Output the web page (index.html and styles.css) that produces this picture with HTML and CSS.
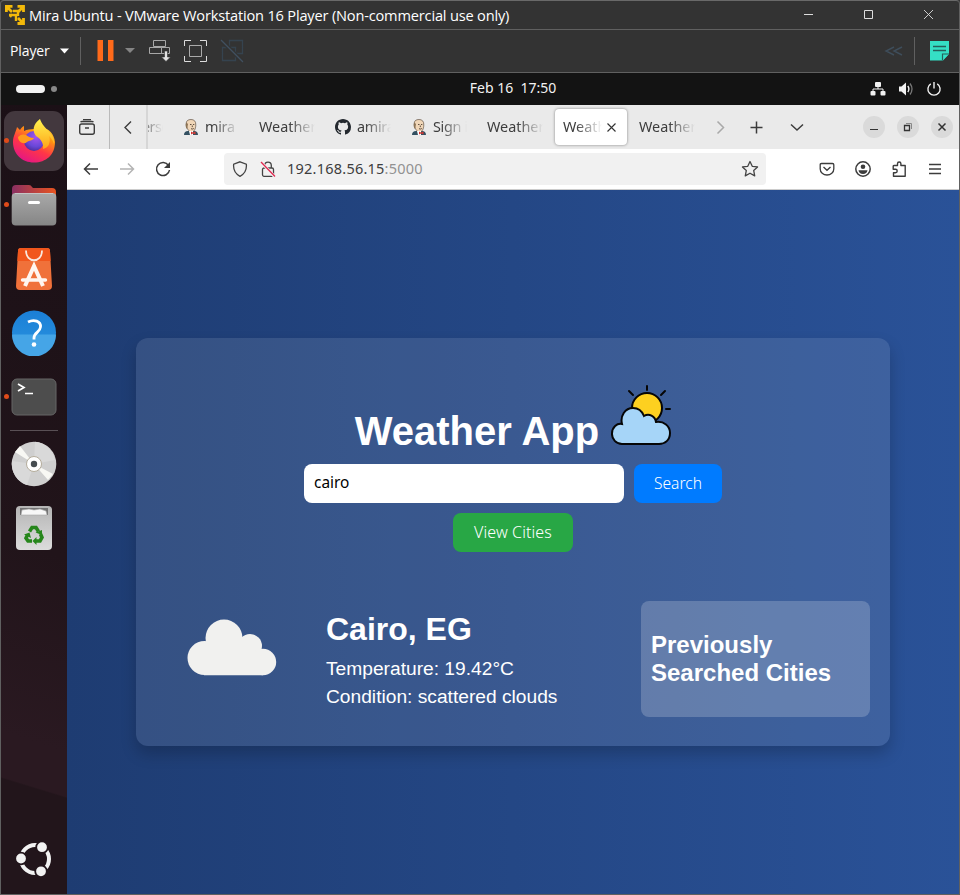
FILE: index.html
```
<!DOCTYPE html>
<html lang="en">
<head>
<meta charset="utf-8">
<title>Weather App</title>
<link rel="stylesheet" href="styles.css">
</head>
<body>
<svg width="0" height="0" class="defs">
  <defs>
    <symbol id="butler" viewBox="0 0 16 16">
      <path d="M1 16c0-3 1.500-3.800 4-4h6c2.500.2 4 1 4 4z" fill="#335061"/>
      <path d="M3.200 5C3 1.800 5 .5 8 .5s5 1.700 4.800 5.500c-.2 4-1.500 7-4.300 7S3.500 9 3.200 5z" fill="#f0d6b7" stroke="#4c3d30" stroke-width=".6"/>
      <path d="M3.300 3.500C2 6 2.800 9 4 10l1-5z" fill="#8b7355"/>
      <path d="M7 5.500h1.500M10 5.500h1.300M8 9.700q1.500.8 2.800-.2M9.300 6.500v1.600" stroke="#3a2c22" stroke-width=".8" fill="none"/>
      <path d="M6 12h4v4H7z" fill="#fff"/>
      <path d="M8 12.500l2 1 2.500-1v3l-2.500-1-2 1z" fill="#d33833"/>
    </symbol>
    <linearGradient id="foxBody" x1=".8" y1="0" x2=".3" y2="1"><stop offset="0" stop-color="#fff44f"/><stop offset=".35" stop-color="#ff980e"/><stop offset=".65" stop-color="#ff3647"/><stop offset="1" stop-color="#e31587"/></linearGradient>
    <linearGradient id="foxFlame" x1="0" y1="0" x2="0" y2="1"><stop offset="0" stop-color="#fff44f"/><stop offset="1" stop-color="#ffa318"/></linearGradient>
    <radialGradient id="globe" cx=".6" cy=".3" r=".8"><stop offset="0" stop-color="#a655ee"/><stop offset=".6" stop-color="#6847d8"/><stop offset="1" stop-color="#45278d"/></radialGradient>
    <linearGradient id="folder"><stop offset="0" stop-color="#8a2f62"/><stop offset="1" stop-color="#e95420"/></linearGradient>
    <linearGradient id="grey" x1="0" y1="0" x2="0" y2="1"><stop offset="0" stop-color="#a9a9a9"/><stop offset="1" stop-color="#858585"/></linearGradient>
    <linearGradient id="bin" x1="0" y1="0" x2="0" y2="1"><stop offset="0" stop-color="#b5b5b5"/><stop offset="1" stop-color="#dcdcdc"/></linearGradient>
    <linearGradient id="help" x1="0" y1="0" x2="0" y2="1"><stop offset="0" stop-color="#1b7fd6"/><stop offset="1" stop-color="#2a93e0"/></linearGradient>
  </defs>
</svg>
<div class="window">
  <header class="titlebar">
    <svg class="vm-logo" width="20" height="20" viewBox="0 0 20 20" fill="none" stroke="#f3b90a" stroke-width="2.800"><path d="M1.400 7V1.400h6.100M12.500 1.400H18.500V7M18.500 13v5.500H12.500M2 2l5 5M18 2l-5 5M18 18l-5-5"/><path d="M4 10h7v6M8 6h5v5M5 12l2-3" stroke-width="2.400"/></svg>
    <h1 class="window-title">Mira Ubuntu - VMware Workstation 16 Player (Non-commercial use only)</h1>
    <div class="win-controls">
      <svg width="60" height="28" viewBox="0 0 60 28"><path d="M26 13.500h9" stroke="#ddd"/></svg>
      <svg width="60" height="28" viewBox="0 0 60 28"><path d="M26.500 9.500h8v8h-8z" stroke="#ddd" fill="none"/></svg>
      <svg width="60" height="28" viewBox="0 0 60 28"><path d="M26 9l9 9M35 9l-9 9" stroke="#ddd" stroke-width=".9"/></svg>
    </div>
  </header>
  <div class="vm-bar">
    <span class="player">Player</span>
    <svg class="caret" width="10" height="6" viewBox="0 0 10 6"><path d="M0 .5h9L4.500 5.500z" fill="#fff"/></svg>
    <i class="bar-sep"></i>
    <svg width="150" height="42" viewBox="0 0 150 42" fill="none">
      <path d="M16.500 10h5.500v21h-5.500zM27 10h5.500v21H27z" fill="#ff6a1a"/>
      <path d="M44 18h10l-5 5z" fill="#858585"/>
      <g stroke="#a8a8a8"><path d="M72.500 10.500h12v6h-12zM68.500 17.500h12v6h-12zM80.500 17.500h8v6h-8z"/></g>
      <path d="M83.500 21h3v6h3L85 31.500 80.500 27h3z" fill="#e3e3e3" stroke="#333" stroke-width=".6"/>
      <path d="M110 10.500h-6.500V16M119 10.500h6.500V16M125.500 26v5.500H119M103.500 26v5.500h6.500" stroke="#ddd"/><path d="M108.500 15.500h12v11h-12z" stroke="#aaa"/>
    </svg>
    <svg class="unity" width="24" height="24" viewBox="0 0 24 24" fill="none" stroke="#35434f" stroke-width="1.300"><path d="M9.500 8V1.500h13v13h-7M2.500 8.500h13v13h-13z"/><path d="M1 1l22 22" stroke="#333" stroke-width="4"/><path d="M1 1l22 22" stroke="#405060"/></svg>
    <svg class="collapse" width="20" height="12" viewBox="0 0 20 12" fill="none" stroke="#3e4d5a" stroke-width="1.400"><path d="M10 2L2 6l8 4M18 2l-8 4 8 4"/></svg>
    <i class="bar-sep right"></i>
    <svg class="note" width="19" height="20" viewBox="0 0 19 20"><path d="M0 0h19v13l-6 6.500H0z" fill="#35dfc5"/><path d="M3 5.500h13M3 9.500h13" stroke="#265f5b" stroke-width="1.600"/><path d="M12.500 19.500v-6.500H19" stroke="#265f5b" fill="#35dfc5" stroke-width="1.200"/></svg>
  </div>
  <div class="gnome-bar">
    <div class="workspaces"><i class="pill"></i><i class="dot"></i></div>
    <time class="clock">Feb 16&nbsp; 17:50</time>
    <div class="status">
      <svg width="16" height="16" viewBox="0 0 16 16" fill="#f2f2f2"><rect x="5" y="1" width="6" height="5" rx="1"/><rect x=".5" y="10" width="5" height="4.500" rx="1"/><rect x="10.500" y="10" width="5" height="4.500" rx="1"/><path d="M8 5v3M3 11V8h10v3" stroke="#f2f2f2" fill="none"/></svg>
      <svg width="16" height="16" viewBox="0 0 16 16"><path d="M1 5.500h2.500L8 1.500v13L3.500 10.500H1z" fill="#f2f2f2"/><path d="M9.800 5q2.200 3 0 6" stroke="#f2f2f2" fill="none" stroke-width="1.400"/><path d="M12 2.500q4 5.500 0 11" stroke="#777" fill="none" stroke-width="1.300"/></svg>
      <svg width="16" height="16" viewBox="0 0 16 16" fill="none" stroke="#f2f2f2" stroke-width="1.400"><path d="M4.800 2.800a6.100 6.100 0 1 0 6.400 0M8 1v6.500"/></svg>
    </div>
  </div>
  <div class="desktop">
    <nav class="dock">
      <div class="app focused running"><svg width="44" height="44" viewBox="0 0 44 44">
        <path d="M27 0c1 4-1 6 1 9C36 8 42 14 43 23 43 36 34 43.500 22 43.500S1 35 1 23c0-6 3-10 4-15l3 3c1-2 2-3 4-4v5c8-3 18-3 22 4z" fill="url(#foxBody)"/>
        <circle cx="22" cy="22" r="10" fill="url(#globe)"/>
        <path d="M28 0c-7 5-8 12-4 17 5 3 8 8 7 13 6-2 6-5 6-5 1-3 1-6 0-8 3 3 4 5 5 8C44 15 31 10 28 0z" fill="url(#foxFlame)"/>
        <path d="M6 18c3-3 5-3 8-2 2 1 4 3 8 3-1 3-5 2-7 4-3 3-9 0-9-5z" fill="#ff9b1d"/></svg></div>
      <div class="app running"><svg width="46" height="42" viewBox="0 0 46 42"><path d="M1 5q0-4 4-4h13q2 0 3 2l1 1h19q4 0 4 4v18H1z" fill="url(#folder)"/><rect x=".7" y="9" width="44.600" height="32.500" rx="4" fill="url(#grey)"/><path d="M4 9.500h38" stroke="#c4c4c4"/><rect x="17" y="17" width="12" height="3" rx="1.500" fill="#fff"/></svg></div>
      <div class="app"><svg width="36" height="42" viewBox="0 0 36 42"><path d="M5 0h26q3 0 3 3l2 35q0 4-4 4H4q-4 0-4-4L2 3q0-3 3-3z" fill="#f0713a"/><path d="M5 0h26q3 0 3 3l.6 10H1.400L2 3q0-3 3-3z" fill="#f1561c"/><path d="M10 2.500c0 13 16 13 16 0" stroke="#f9e8df" stroke-width="1.800" fill="none"/><path d="M9 38l9-20 9 20" stroke="#fff6f0" stroke-width="4" fill="none"/><path d="M6.500 32h23" stroke="#fff6f0" stroke-width="3.400" stroke-linecap="round"/></svg></div>
      <div class="app"><svg width="46" height="46" viewBox="0 0 46 46"><circle cx="23" cy="22.500" r="22" fill="url(#help)"/><path d="M1 24.500h44a22 22 0 0 1-44 0z" fill="#45a5e7"/><path d="M17 12c6-3 13-1 12.500 5C29 22.500 23 22.500 23 28v1.500" stroke="#fff" stroke-width="2.800" fill="none"/><circle cx="23" cy="34.500" r="2.300" fill="#fff"/></svg></div>
      <div class="app running"><svg width="46" height="38" viewBox="0 0 46 38"><rect x="1" y="1" width="44" height="36" rx="5" fill="#4d4d4d" stroke="#666"/><path d="M7 6l6 3.500L7 13M14 15.500h8" stroke="#fff" stroke-width="1.700" fill="none"/></svg></div>
      <hr class="dock-line">
      <div class="app"><svg width="46" height="46" viewBox="0 0 46 46"><circle cx="23" cy="23" r="22.300" fill="#cfcfcf"/><path d="M23 23L1 20a22 22 0 0 0 15 24zM23 23L24 .8A22 22 0 0 1 44 19z" fill="#d9d9d9"/><path d="M23 23L4 11l5-6zM23 23l19 10-5 6z" fill="#f8f8f4"/><circle cx="23" cy="23" r="7.500" fill="#fff" stroke="#b5ad9c"/><circle cx="23" cy="23" r="3.200" fill="#464c50"/></svg></div>
      <div class="app"><svg width="38" height="46" viewBox="0 0 38 46"><rect x="1" y="1" width="36" height="44" rx="4" fill="url(#bin)"/><path d="M5 3h28v7H5z" fill="#737373"/><path d="M6 10l1-5 7-1 5 1 6-1 6 2 1 4z" fill="#f7f7f7" stroke="#aaa" stroke-width=".6"/><g stroke="#26861b" stroke-width="3.600" fill="none"><path d="M14.500 26.500l2.500-4h4l2.500 4M25.500 29l1.500 3.500-2 3.500H21M17 36h-4l-2-3 1.500-3"/></g><path d="M20.500 27.500l6.500-2.500v5zM21.500 32v8l-4-4zM9 29.500l5.500-2 1.500 5.500z" fill="#26861b"/></svg></div>
      <svg class="show-apps" width="36" height="36" viewBox="0 0 36 36"><circle cx="19" cy="18" r="14" fill="none" stroke="#f2f2f2" stroke-width="4"/><g fill="#f2f2f2" stroke="#22151b" stroke-width="1.800"><circle cx="5" cy="17.500" r="5.800"/><circle cx="26" cy="6.200" r="5.800"/><circle cx="25" cy="30.300" r="5.800"/></g></svg>
    </nav>
    <div class="browser">
      <div class="tabstrip">
        <div class="view-btn"><svg width="16" height="16" viewBox="0 0 16 16" fill="none" stroke="#3c3c3c" stroke-width="1.400"><rect x=".7" y="5" width="14.600" height="10.300" rx="2"/><path d="M1.500 2.800Q2 2.500 3 2.500h10q1 0 1.500.3M4 .5h8M6 9h4" /></svg></div>
        <svg class="scroll-l" width="36" height="44" viewBox="0 0 36 44"><path d="M21 16.500l-6 6 6 6" fill="none" stroke="#3c3c3c" stroke-width="1.400"/></svg>
        <div class="tabs">
          <div class="tab first"><span>Perso</span></div>
          <div class="tab"><svg width="16" height="16"><use href="#butler"/></svg><span>mira</span></div>
          <div class="tab"><span>Weather</span></div>
          <div class="tab"><svg width="16" height="16" viewBox="0 0 16 16"><path fill="#24292f" d="M8 0C3.580 0 0 3.580 0 8c0 3.540 2.290 6.530 5.470 7.590.4.070.55-.17.55-.38 0-.19-.01-.82-.01-1.490-2.010.37-2.530-.49-2.690-.94-.09-.23-.48-.94-.82-1.130-.28-.15-.68-.52-.01-.53.63-.01 1.080.58 1.230.82.72 1.210 1.870.87 2.330.66.07-.52.28-.87.51-1.070-1.780-.2-3.640-.89-3.640-3.950 0-.87.31-1.590.82-2.150-.08-.2-.36-1.020.08-2.120 0 0 .67-.21 2.200.82a7.500 7.500 0 0 1 4 0c1.530-1.040 2.200-.82 2.200-.82.44 1.100.16 1.920.08 2.120.51.56.82 1.270.82 2.150 0 3.070-1.870 3.750-3.650 3.950.29.25.54.73.54 1.480 0 1.070-.01 1.930-.01 2.200 0 .21.15.46.55.38A8.010 8.010 0 0 0 16 8c0-4.420-3.580-8-8-8z"/></svg><span>amira</span></div>
          <div class="tab"><svg width="16" height="16"><use href="#butler"/></svg><span>Sign i</span></div>
          <div class="tab"><span>Weather</span></div>
          <div class="tab active"><span>Weath</span><svg class="close" width="9" height="9" viewBox="0 0 9 9"><path d="M.5.5l8 8M8.500.5l-8 8" stroke="#333" stroke-width="1.100"/></svg></div>
          <div class="tab"><span>Weather</span></div>
        </div>
        <svg class="tool-ic" width="108" height="44" viewBox="0 0 108 44" fill="none" stroke="#3c3c3c" stroke-width="1.500"><path d="M10.500 16.500l6 6-6 6" stroke="#a9a9a9"/><path d="M49.500 16.500v12M43.500 22.500h12"/><path d="M84 19.500l6 5.500 6-5.500"/></svg>
        <div class="wm">
          <span><svg width="10" height="10" viewBox="0 0 10 10"><path d="M1 7.500h8" stroke="#333" stroke-width="1.200"/></svg></span>
          <span><svg width="10" height="10" viewBox="0 0 10 10" fill="none" stroke="#333"><path d="M1.500 3.500h5v5h-5z" stroke-width="1.300"/><path d="M3 1.500h5.500V7" stroke="#888"/></svg></span>
          <span><svg width="10" height="10" viewBox="0 0 10 10"><path d="M1.500 1.500l7 7M8.500 1.500l-7 7" stroke="#333" stroke-width="1.500"/></svg></span>
        </div>
      </div>
      <div class="navbar">
        <svg width="36" height="40" viewBox="0 0 36 40" fill="none" stroke="#3c3c3c" stroke-width="1.500"><path d="M25 20H11.500M17 14.500L11.500 20l5.500 5.500"/></svg>
        <svg width="36" height="40" viewBox="0 0 36 40" fill="none" stroke="#b4b4b4" stroke-width="1.500"><path d="M11 20h13.500M19 14.500l5.500 5.500-5.500 5.500"/></svg>
        <svg width="36" height="40" viewBox="0 0 36 40" fill="none" stroke="#3c3c3c" stroke-width="1.500"><path d="M23.500 16.500a6.500 6.500 0 1 0 1 4.500"/><path d="M25 13v6h-6z" fill="#3c3c3c" stroke="none"/></svg>
        <div class="urlbar">
          <svg width="16" height="16" viewBox="0 0 16 16" fill="none" stroke="#444" stroke-width="1.300"><path d="M8 .8l6.300 2.300c.6 5-1.500 9.700-6.300 12.200C3.200 12.800 1.100 8.100 1.700 3.100z"/></svg>
          <svg width="16" height="16" viewBox="0 0 16 16" fill="none" stroke="#444" stroke-width="1.300"><rect x="2.500" y="7" width="11" height="8.300" rx="1.500"/><path d="M4.700 7V4.500a3.300 3.300 0 0 1 6.600 0V7"/><path d="M1.500 1.500l13 14" stroke="#f1f1f1" stroke-width="3"/><path d="M1 1l14 14.500" stroke="#e22850"/></svg>
          <span class="url">192.168.56.15<span class="port">:5000</span></span>
          <svg class="star" width="18" height="18" viewBox="0 0 16 16" fill="none" stroke="#444" stroke-width="1.150" stroke-linejoin="round"><path d="M8 1.300l2 4.300 4.700.6-3.400 3.200.9 4.700L8 11.800l-4.200 2.300.9-4.700L1.300 6.200 6 5.600z"/></svg>
        </div>
        <div class="actions">
          <svg width="16" height="16" viewBox="0 0 16 16" fill="none" stroke="#3c3c3c" stroke-width="1.300"><path d="M2.500 2.500h11q1.300 0 1.300 1.300V8A6.800 6 0 0 1 1.200 8V3.800q0-1.300 1.300-1.300z"/><path d="M4.500 6L8 9.300 11.500 6"/></svg>
          <svg width="16" height="16" viewBox="0 0 16 16"><circle cx="8" cy="8" r="7.200" fill="none" stroke="#3c3c3c" stroke-width="1.500"/><circle cx="8" cy="5.800" r="2.300" fill="#3c3c3c"/><path d="M3.500 9.300h9q-.5 3.700-4.500 3.700t-4.500-3.700z" fill="#3c3c3c"/></svg>
          <svg width="16" height="16" viewBox="0 0 16 16" fill="none" stroke="#3c3c3c" stroke-width="1.400" stroke-linejoin="round"><path d="M3 4.500h3.500V2.700a1.700 1.700 0 0 1 3.400 0v1.800h4.300v10.800H2.500v-3.600h2a1.700 1.700 0 0 0 0-3.400H2.200V5.500q0-1 .8-1z"/></svg>
          <svg width="16" height="16" viewBox="0 0 16 16" stroke="#3c3c3c" stroke-width="1.300"><path d="M2 3.500h12M2 8h12M2 12.500h12"/></svg>
        </div>
      </div>
      <main class="page">
        <section class="card">
          <h2 class="heading">Weather App
            <svg width="60" height="60" viewBox="0 0 60 60" stroke="#060606" stroke-width="2" stroke-linecap="round"><path d="M36 1v4M54 6l-4 4M18 6l4 4M55 24h4" /><circle cx="36" cy="23" r="15" fill="#fdd020"/><path d="M11 59a10 10 0 0 1-10-10.500C1 42 6 38 11 39c-2-8 3-16 11-16 6 0 9 3 11 8 5-3 11 0 12 6C53 36 59 41 59 48c0 7-5 11-11 11z" fill="#a6d5f8"/></svg>
          </h2>
          <form class="search"><input class="field" type="text" value="cairo"><button class="btn primary" type="button">Search</button></form>
          <button class="btn success" type="button">View Cities</button>
          <div class="results">
            <svg class="cloud" width="90" height="57" viewBox="0 0 90 57" fill="#f1f1ef"><circle cx="17.500" cy="39" r="17"/><circle cx="37" cy="19" r="18.500"/><circle cx="63" cy="27" r="12"/><circle cx="76" cy="43" r="13.200"/><path d="M17 28h46l13 10v18.200H17z"/></svg>
            <div class="weather">
              <h3 class="city">Cairo, EG</h3>
              <p>Temperature: 19.42°C</p>
              <p>Condition: scattered clouds</p>
            </div>
            <aside class="history"><h4>Previously Searched Cities</h4></aside>
          </div>
        </section>
      </main>
    </div>
  </div>
</div>
</body>
</html>
```
FILE: styles.css
```
* { box-sizing: border-box; }
body { margin: 0; background: #333; font-family: "Noto Sans", "Open Sans", sans-serif; overflow: hidden; }
h1, h2, h3, h4, p { margin: 0; }
svg { display: block; flex: none; }
.defs { position: absolute; }

.window { width: 960px; height: 895px; border: 1px solid #606060; border-top-color: #696969; border-radius: 4px 4px 0 0; display: flex; flex-direction: column; background: #333; overflow: hidden; }
.titlebar { height: 29px; display: flex; align-items: center; border-bottom: 1px solid #606060; flex: none; }
.vm-logo { margin-left: 4px; }
.window-title { margin-left: 4px; font: 400 14.600px "Open Sans", sans-serif; letter-spacing: -.18px; color: #fff; white-space: nowrap; }
.win-controls { display: flex; margin-left: auto; margin-right: 1px; }

.vm-bar { height: 43px; display: flex; align-items: center; border-bottom: 1px solid #606060; color: #fff; flex: none; }
.player { margin-left: 9px; width: 41px; font: 400 14px "Open Sans", sans-serif; letter-spacing: -.1px; padding-bottom: 2px; }
.caret { margin-left: 9px; }
.bar-sep { width: 1px; height: 28px; background: #606060; margin-left: 10px; }
.unity { margin-left: -11px; }
.collapse { margin-left: auto; }
.bar-sep.right { margin-left: 10px; }
.note { margin: 0 10px 0 15px; }

.gnome-bar { height: 32px; background: #131313; display: grid; grid-template-columns: 1fr auto 1fr; align-items: center; flex: none; }
.workspaces { display: flex; align-items: center; gap: 6px; padding-left: 15px; }
.pill { width: 29px; height: 8px; border-radius: 4px; background: #f2f2f2; }
.dot { width: 6px; height: 6px; border-radius: 50%; background: #888; }
.clock { font-size: 14px; color: #f2f2f2; margin: 0 -33px 0 33px; padding-bottom: 3px; }
.status { display: flex; gap: 12px; justify-content: flex-end; padding-right: 17px; }

.desktop { flex: 1; display: flex; min-height: 0; }
.dock { width: 66px; background: linear-gradient(197deg, #1b1016 0, #21141a 56%, #2a1921 80%, #2a1921 85.500%, #22151b 85.700%); display: flex; flex-direction: column; align-items: center; gap: 4px; padding-top: 6px; flex: none; }
.app { width: 60px; height: 60px; border-radius: 11px; display: flex; align-items: center; justify-content: center; position: relative; flex: none; }
.focused { background: #43383e; }
.running::before { content: ""; position: absolute; left: 0; top: 27px; width: 5px; height: 5px; border-radius: 50%; background: #df4b1a; }
.dock-line { width: 48px; height: 1px; border: 0; background: #595055; margin: -1px 0 -1px; flex: none; }
.show-apps { margin: auto 0 17px; }

.browser { flex: 1; display: flex; flex-direction: column; min-width: 0; }
.tabstrip { height: 44px; background: #eaeaea; display: flex; align-items: center; flex: none; }
.view-btn { width: 43px; height: 44px; border-right: 1px solid #bababa; display: flex; align-items: center; justify-content: center; padding-right: 2px; }
.tabs { width: 561px; height: 44px; display: flex; gap: 4px; align-items: center; overflow: hidden; border-left: 2px solid #d6d6d6; }
.tab { width: 72px; height: 36px; flex: none; padding: 0 8px; display: flex; align-items: center; gap: 6px; font-size: 14.400px; color: #3d3d3d; border-radius: 4px; }
.tab span { flex: 1; padding-bottom: 2px; overflow: hidden; white-space: nowrap; -webkit-mask-image: linear-gradient(90deg, #000 calc(100% - 26px), transparent); mask-image: linear-gradient(90deg, #000 calc(100% - 26px), transparent); }
.tab svg + span { letter-spacing: -.3px; }
.tab.first { margin-left: -49px; padding-left: 35px; }
.tab.first span { letter-spacing: -.6px; }
.active { background: #fff; box-shadow: 0 0 3px rgba(0,0,0,.45); gap: 5px; padding-right: 11px; }
.wm { display: flex; gap: 12px; margin-left: 48px; }
.wm span { width: 22px; height: 22px; border-radius: 50%; background: #dadada; display: flex; align-items: center; justify-content: center; }

.navbar { height: 41px; background: #fff; border-bottom: 1px solid #ccc; display: flex; align-items: center; padding-left: 6px; flex: none; }
.urlbar { width: 542px; height: 32px; margin-left: 43px; border-radius: 4px; background: #f1f1f1; display: flex; align-items: center; gap: 12px; padding: 0 7px 0 8px; }
.url { font-size: 14.500px; letter-spacing: .23px; color: #3d3d3d; margin-left: -1px; padding-bottom: 2px; }
.port { color: #929292; }
.star { margin-left: auto; }
.actions { display: flex; gap: 20px; margin-left: 53px; }

.page { flex: 1; background: linear-gradient(90deg, #1e3c72, #2a5298); display: flex; align-items: center; justify-content: center; font-family: "Liberation Sans", Arial, sans-serif; color: #fff; }
.card { width: 754px; height: 408px; border-radius: 12px; background: rgba(255,255,255,.1); box-shadow: 0 8px 16px rgba(0,0,0,.2); display: flex; flex-direction: column; align-items: center; }
.heading { height: 126px; padding-top: 47px; display: flex; align-items: baseline; gap: 12px; font-size: 40px; line-height: 48px; flex: none; }
.search { display: flex; gap: 10px; }
.field, .btn { height: 39px; border: 0; border-radius: 8px; font-family: "Noto Sans", "Open Sans", sans-serif; font-size: 16px; flex: none; }
.field { width: 320px; padding: 0 10px 2px; background: #fff; color: #000; outline: 0; font-size: 15.400px; }
.btn { color: #fff; font-weight: 300; padding: 0 0 2px; }
.primary { width: 88px; background: #007bff; font-size: 15.600px; }
.success { width: 120px; background: #28a745; margin-top: 10px; letter-spacing: .1px; }
.results { width: 100%; height: 116px; margin-top: 49px; display: flex; padding: 0 20px 0 51px; }
.cloud { margin-top: 18px; }
.weather { margin-left: 49px; padding-top: 9px; }
.city { font-size: 32px; line-height: 38px; margin-bottom: 7px; }
.weather p { font-size: 19.200px; line-height: 28px; }
.history { width: 229px; height: 116px; margin-left: auto; border-radius: 8px; background: rgba(255,255,255,.2); padding: 30px 10px; }
.history h4 { font-size: 24px; line-height: 28px; }
```
